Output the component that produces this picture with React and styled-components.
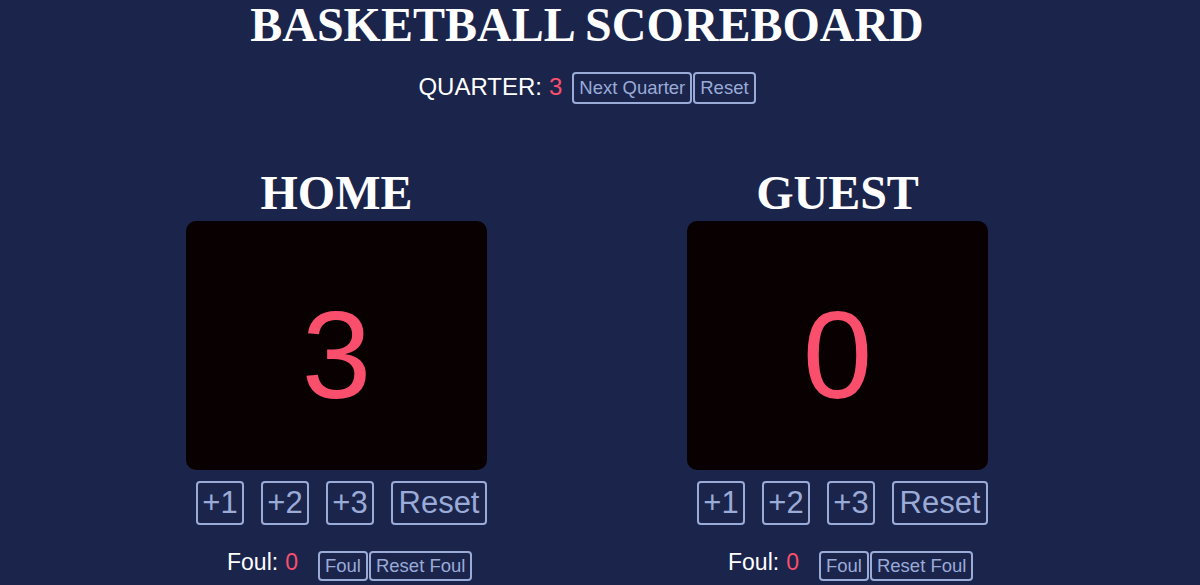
import React, { useState } from "react";
import styled, { createGlobalStyle } from "styled-components";

const GlobalStyle = createGlobalStyle`
  html, body {
    margin: 0;
    background: #1b244a;
    color: white;
    font-family: "Liberation Sans", Arial, sans-serif;
  }
`;

const Page = styled.div`
  width: 1174px;
  display: flex;
  flex-direction: column;
  align-items: center;
`;

const Title = styled.h1`
  font-family: "Liberation Serif", "Times New Roman", serif;
  font-size: 48px;
  margin: 0;
  line-height: 49px;
`;

const QuarterRow = styled.div`
  display: flex;
  align-items: center;
  margin-top: 23px;
  font-size: 24px;
`;

const Label = styled.span`
  margin-top: ${(p) => p.raise || 0}px;
`;

const Red = styled.span`
  color: #f94f6d;
  margin-left: 7px;
`;

const Button = styled.button`
  background: none;
  border: 2px solid #9aabd8;
  border-radius: 4px;
  color: #9aabd8;
  font-family: "Liberation Sans", Arial, sans-serif;
  font-size: 18.5px;
  height: ${(p) => (p.tall ? "32px" : "30px")};
  padding: 0 5px;
  margin: 0;
  cursor: pointer;
`;

const BigButton = styled(Button)`
  font-size: 31px;
  height: 44px;
  width: ${(p) => (p.wide ? "96px" : "48px")};
  padding: 0;
`;

const ButtonGroup = styled.div`
  display: flex;
  margin-left: ${(p) => p.offset || 0}px;
  gap: 1px;
`;

const Teams = styled.div`
  display: flex;
  gap: 200px;
  margin-top: 61px;
`;

const Team = styled.div`
  width: 301px;
  display: flex;
  flex-direction: column;
`;

const TeamName = styled.h2`
  font-family: "Liberation Serif", "Times New Roman", serif;
  font-size: 48px;
  margin: 0;
  line-height: 55px;
  text-align: center;
`;

const ScoreBox = styled.div`
  height: 249px;
  background: #080001;
  border-radius: 10px;
  display: flex;
  align-items: center;
  justify-content: center;
  color: #f94f6d;
  font-size: 125px;
  margin-top: 1px;
  padding-top: 18px;
  box-sizing: border-box;
`;

const ScoreButtons = styled.div`
  display: flex;
  gap: 17px;
  margin-top: 11px;
  padding-left: 10px;
`;

const FoulRow = styled.div`
  display: flex;
  align-items: center;
  margin-top: 26px;
  padding-left: 41px;
  font-size: 23px;
`;

function TeamPanel({ name, score, setScore, fouls, setFouls }) {
  return (
    <Team>
      <TeamName>{name}</TeamName>
      <ScoreBox>{score}</ScoreBox>
      <ScoreButtons>
        <BigButton onClick={() => setScore(score + 1)}>+1</BigButton>
        <BigButton onClick={() => setScore(score + 2)}>+2</BigButton>
        <BigButton onClick={() => setScore(score + 3)}>+3</BigButton>
        <BigButton wide onClick={() => setScore(0)}>Reset</BigButton>
      </ScoreButtons>
      <FoulRow>
        <Label raise={-8}>
          Foul:<Red>{fouls}</Red>
        </Label>
        <ButtonGroup offset={20}>
          <Button onClick={() => setFouls(fouls + 1)}>Foul</Button>
          <Button onClick={() => setFouls(0)}>Reset Foul</Button>
        </ButtonGroup>
      </FoulRow>
    </Team>
  );
}

export default function App() {
  const [quarter, setQuarter] = useState(3);
  const [home, setHome] = useState(3);
  const [guest, setGuest] = useState(0);
  const [homeFouls, setHomeFouls] = useState(0);
  const [guestFouls, setGuestFouls] = useState(0);

  return (
    <Page>
      <GlobalStyle />
      <Title>BASKETBALL SCOREBOARD</Title>
      <QuarterRow>
        <Label raise={-3}>
          QUARTER:<Red>{quarter}</Red>
        </Label>
        <ButtonGroup offset={10}>
          <Button tall onClick={() => setQuarter(quarter + 1)}>Next Quarter</Button>
          <Button tall onClick={() => setQuarter(1)}>Reset</Button>
        </ButtonGroup>
      </QuarterRow>
      <Teams>
        <TeamPanel
          name="HOME"
          score={home}
          setScore={setHome}
          fouls={homeFouls}
          setFouls={setHomeFouls}
        />
        <TeamPanel
          name="GUEST"
          score={guest}
          setScore={setGuest}
          fouls={guestFouls}
          setFouls={setGuestFouls}
        />
      </Teams>
    </Page>
  );
}
